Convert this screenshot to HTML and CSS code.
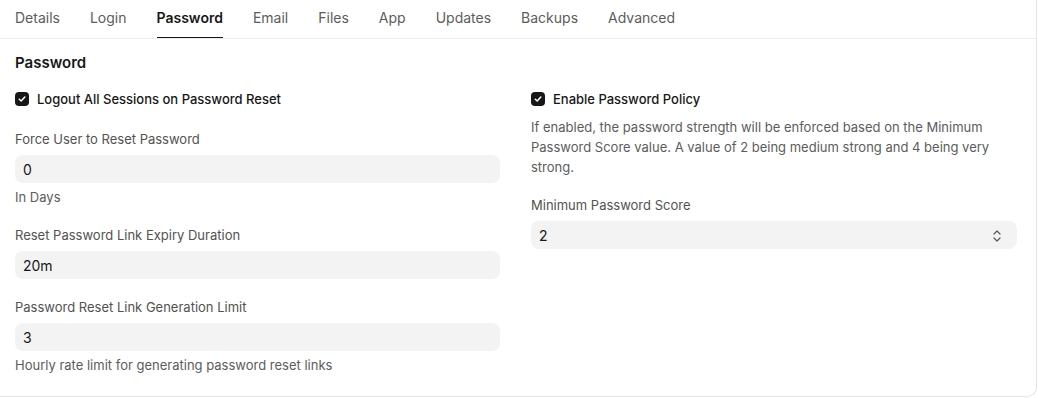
FILE: index.html
```html
<!DOCTYPE html>
<html lang="en">
<head>
    <meta charset="UTF-8">
    <title>Password Settings</title>
    <link rel="stylesheet" href="styles.css">
</head>
<body>
    <div class="card">
        <div class="tabs">
            <span class="tab">Details</span>
            <span class="tab">Login</span>
            <span class="tab active">Password</span>
            <span class="tab">Email</span>
            <span class="tab">Files</span>
            <span class="tab">App</span>
            <span class="tab">Updates</span>
            <span class="tab">Backups</span>
            <span class="tab">Advanced</span>
        </div>

        <div class="section">
            <h2>Password</h2>
            <div class="columns">
                <div class="column">
                    <label class="check-row">
                        <span class="checkbox"><svg width="8" height="8" viewBox="0 0 8 8"><path d="M1.3 4.2 3.2 6 6.8 2" fill="none" stroke="#fff" stroke-width="1.5" stroke-linecap="round" stroke-linejoin="round"/></svg></span>
                        Logout All Sessions on Password Reset
                    </label>

                    <div class="field">
                        <div class="label">Force User to Reset Password</div>
                        <div class="input">0</div>
                        <div class="hint">In Days</div>
                    </div>

                    <div class="field">
                        <div class="label">Reset Password Link Expiry Duration</div>
                        <div class="input">20m</div>
                    </div>

                    <div class="field">
                        <div class="label">Password Reset Link Generation Limit</div>
                        <div class="input">3</div>
                        <div class="hint">Hourly rate limit for generating password reset links</div>
                    </div>
                </div>

                <div class="column">
                    <label class="check-row">
                        <span class="checkbox"><svg width="8" height="8" viewBox="0 0 8 8"><path d="M1.3 4.2 3.2 6 6.8 2" fill="none" stroke="#fff" stroke-width="1.5" stroke-linecap="round" stroke-linejoin="round"/></svg></span>
                        Enable Password Policy
                    </label>
                    <p class="description">If enabled, the password strength will be enforced based on the Minimum Password Score value. A value of 2 being medium strong and 4 being very strong.</p>

                    <div class="field">
                        <div class="label">Minimum Password Score</div>
                        <div class="input select">
                            <span>2</span>
                            <svg width="10" height="14" viewBox="0 0 10 14"><path d="M2 5 5 2 8 5M2 9 5 12 8 9" fill="none" stroke="#5c5c5c" stroke-width="1.3" stroke-linecap="round" stroke-linejoin="round"/></svg>
                        </div>
                    </div>
                </div>
            </div>
        </div>
    </div>
</body>
</html>
```

FILE: styles.css
```css
body { margin: 0; font-family: Inter, "Noto Sans", sans-serif; background: #fff; color: #171717; }
.card { width: 1037px; height: 397px; box-sizing: border-box; border-right: 1px solid #e6e6e6; border-bottom: 1px solid #e6e6e6; border-bottom-right-radius: 10px; }
.tabs { display: flex; gap: 30px; padding: 0 15px; height: 39px; box-sizing: border-box; border-bottom: 1px solid #ececec; }
.tab { font-size: 14px; color: #5c5c5c; line-height: 36px; height: 38px; box-sizing: border-box; }
.tab.active { color: #171717; font-weight: 600; border-bottom: 1px solid #171717; }
.section { padding: 14px 20px 0 15px; }
h2 { margin: 0 0 16px; font-size: 15px; font-weight: 600; line-height: 20px; }
.columns { display: grid; grid-template-columns: 485px 486px; column-gap: 31px; }
.check-row { display: flex; align-items: center; gap: 8px; height: 20px; font-size: 13px; font-weight: 500; color: #171717; margin-bottom: 22px; }
.checkbox { width: 14px; height: 14px; border-radius: 4px; background: #171717; display: flex; align-items: center; justify-content: center; }
.column .description + .field { margin-top: 20px; }
.description { margin: -14px 0 0; font-size: 13px; line-height: 20px; color: #5c5c5c; }
.field { margin-bottom: 20px; }
.label { font-size: 13px; line-height: 16px; color: #525252; margin-bottom: 8px; }
.input { height: 28px; box-sizing: border-box; background: #f3f3f3; border-radius: 8px; padding: 1px 8px 0; font-size: 14px; line-height: 28px; color: #171717; }
.select { display: flex; align-items: center; justify-content: space-between; padding-right: 15px; }
.hint { font-size: 13px; line-height: 20px; margin-top: 4px; color: #5c5c5c; }
```
